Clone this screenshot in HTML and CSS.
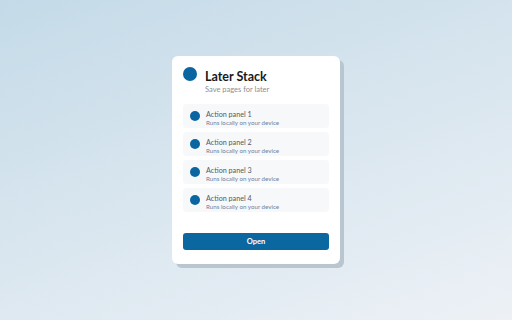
FILE: index.html
```html
<!doctype html>
<html>
  <head>
    <meta charset="utf-8">
    <title>Later Stack</title>
    <link rel="stylesheet" href="styles.css">
  </head>
  <body>
    <div class="card">
      <div class="head">
        <div class="logo"></div>
        <div>
          <div class="title">Later Stack</div>
          <div class="sub">Save pages for later</div>
        </div>
      </div>
      <div class="list">
        <div class="row">
          <div class="dot"></div>
          <div>
            <div class="name">Action panel 1</div>
            <div class="desc">Runs locally on your device</div>
          </div>
        </div>
        <div class="row">
          <div class="dot"></div>
          <div>
            <div class="name">Action panel 2</div>
            <div class="desc">Runs locally on your device</div>
          </div>
        </div>
        <div class="row">
          <div class="dot"></div>
          <div>
            <div class="name">Action panel 3</div>
            <div class="desc">Runs locally on your device</div>
          </div>
        </div>
        <div class="row">
          <div class="dot"></div>
          <div>
            <div class="name">Action panel 4</div>
            <div class="desc">Runs locally on your device</div>
          </div>
        </div>
      </div>
      <button class="open">Open</button>
    </div>
  </body>
</html>
```

FILE: styles.css
```css
html,body{height:100%;}
body{
  margin:0;
  display:flex; align-items:center; justify-content:center;
  background:linear-gradient(160deg,#c4dae8 0%,#d9e6ef 50%,#edf1f6 100%);
  font-family:"Lato","Noto Sans","Liberation Sans",sans-serif;
}
.card{
  width:146px; height:183px;
  padding:11px 11px 14px 11px;
  background:#fff; border-radius:6px;
  box-shadow:4px 4px 0 #b9c6cf;
  display:flex; flex-direction:column;
}
.head{display:flex; gap:8px; align-items:flex-start;}
.logo{width:14px; height:14px; border-radius:50%; background:#0b65a0;}
.title{font-size:12.5px; font-weight:700; color:#1a1a1a; line-height:16px; margin-top:2px;}
.sub{font-size:7.5px; color:#8a8f96; line-height:9px;}
.list{display:flex; flex-direction:column; gap:4px; margin-top:10px;}
.row{
  height:24px; background:#f7f8fa; border-radius:4px;
  display:flex; align-items:center; gap:6px; padding-left:7px;
}
.row>div:last-child{padding-top:4px;}
.dot{width:10px; height:10px; border-radius:50%; background:#0b65a0;}
.name{font-size:7.2px; color:#555a60; line-height:9px;}
.desc{font-size:6.2px; color:#6d82a0; line-height:8px;}
.open{
  margin-top:auto;
  height:17px; border:0; border-radius:3px;
  background:#0b67a0; color:#fff;
  font-family:inherit; font-size:7.5px; font-weight:700;
}
```
